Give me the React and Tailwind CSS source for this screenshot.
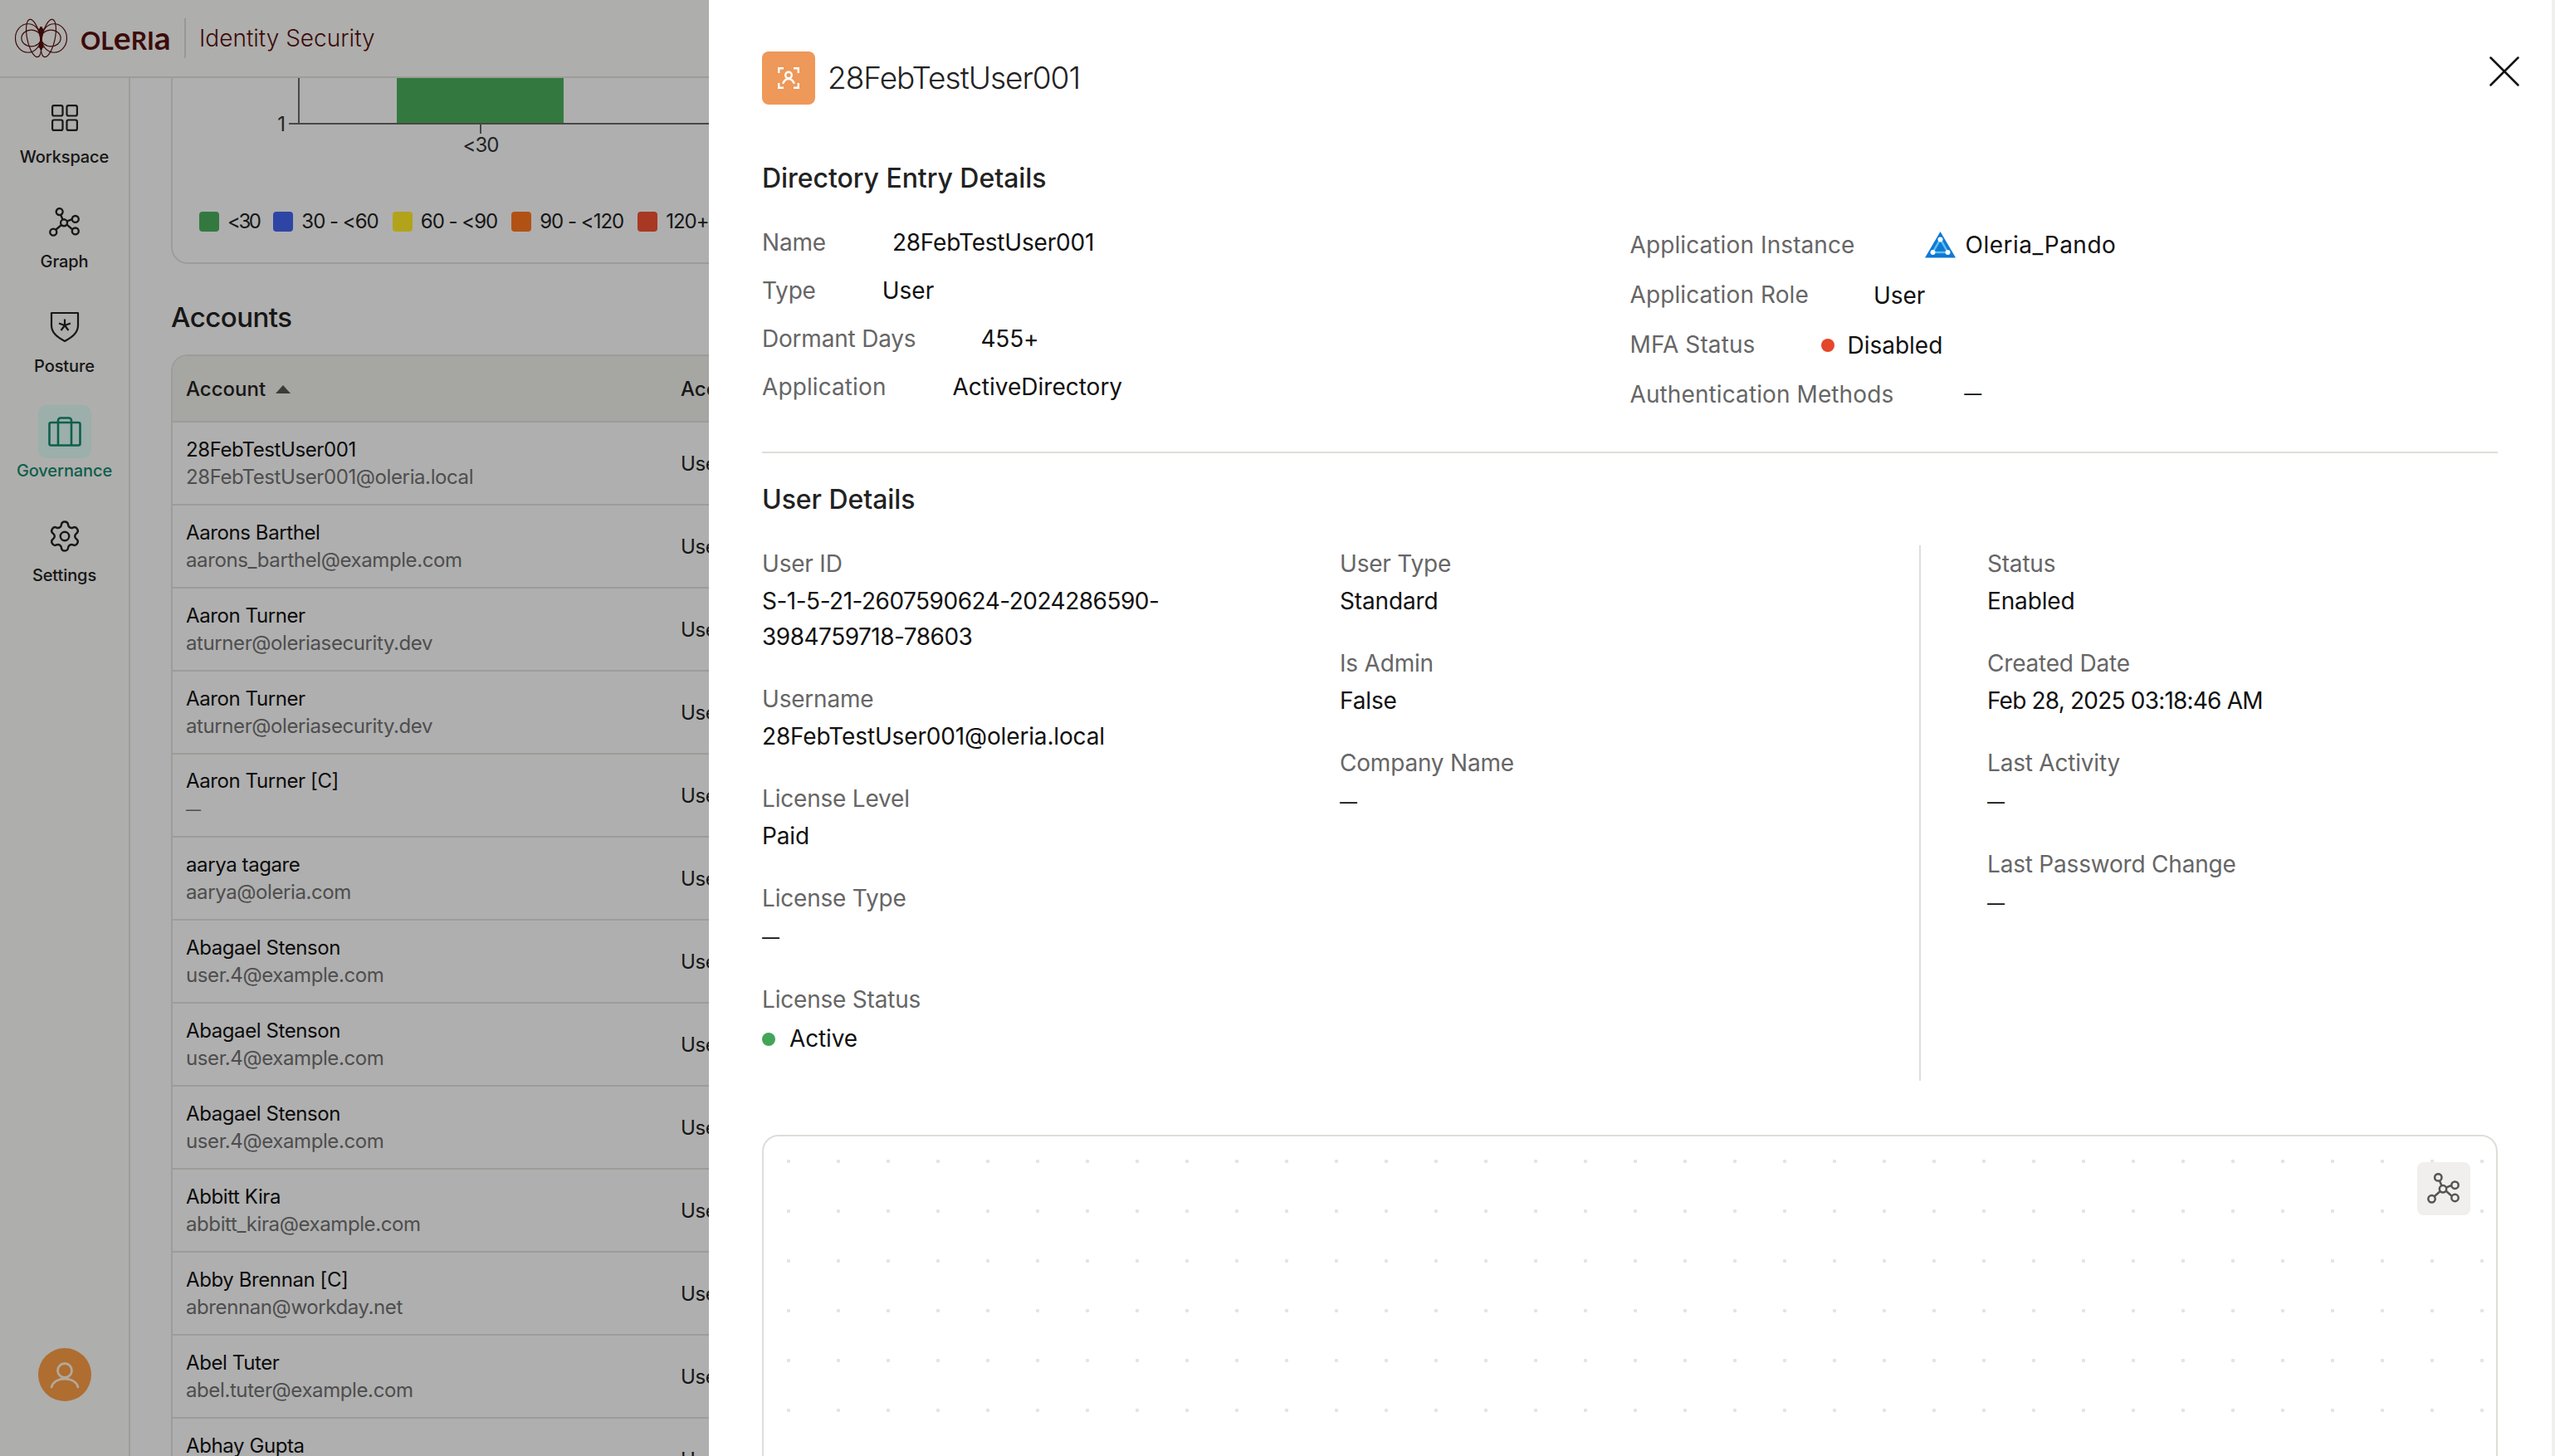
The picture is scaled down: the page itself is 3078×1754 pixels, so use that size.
import { Settings, X } from 'lucide-react'

const ACCOUNTS = [
  ['28FebTestUser001', '28FebTestUser001@oleria.local'],
  ['Aarons Barthel', 'aarons_barthel@example.com'],
  ['Aaron Turner', 'aturner@oleriasecurity.dev'],
  ['Aaron Turner', 'aturner@oleriasecurity.dev'],
  ['Aaron Turner [C]', null],
  ['aarya tagare', 'aarya@oleria.com'],
  ['Abagael Stenson', 'user.4@example.com'],
  ['Abagael Stenson', 'user.4@example.com'],
  ['Abagael Stenson', 'user.4@example.com'],
  ['Abbitt Kira', 'abbitt_kira@example.com'],
  ['Abby Brennan [C]', 'abrennan@workday.net'],
  ['Abel Tuter', 'abel.tuter@example.com'],
  ['Abhay Gupta', ''],
]

const LEGEND = [
  ['<30', 'bg-[#49ae5b]', 'tracking-[-2.5px]'],
  ['30 - <60', 'bg-[#4364ed]', 'tracking-[-1px]'],
  ['60 - <90', 'bg-[#ffea28]', 'tracking-[-1px]'],
  ['90 - <120', 'bg-[#ff751d]', 'tracking-[-1px]'],
  ['120+', 'bg-[#f14f33]', 'tracking-[-1px]'],
]

function NetworkIcon({ className }) {
  return (
    <svg viewBox="0 0 40 38" fill="none" stroke="currentColor" strokeWidth="2.5" className={className}>
      <path d="M15 9.5l2.5 6M22.7 17.6l6.6-2.6M22.5 21.500l6.800 6M15.800 22l-7.400 6.500" />
      <circle cx="13.3" cy="5.4" r="4.2" />
      <circle cx="33.500" cy="14.700" r="4.200" />
      <circle cx="33.500" cy="30" r="4.200" />
      <circle cx="5.500" cy="31.300" r="4.200" />
      <circle cx="19" cy="19.300" r="4.200" />
    </svg>
  )
}

function WorkspaceIcon({ className }) {
  return (
    <svg viewBox="0 0 32 32" fill="none" stroke="currentColor" strokeWidth="2.2" className={className}>
      <rect x="1.1" y="1.1" width="12.4" height="12.4" rx="2" />
      <rect x="18.5" y="1.1" width="12.4" height="12.4" rx="2" />
      <rect x="1.1" y="18.5" width="12.4" height="12.4" rx="2" />
      <rect x="18.5" y="18.5" width="12.4" height="12.4" rx="2" />
    </svg>
  )
}

function ShieldIcon({ className }) {
  return (
    <svg viewBox="0 0 36 38" fill="none" stroke="currentColor" strokeWidth="2.2" className={className}>
      <path d="M2 2h32v15c0 9-7 14-16 19C9 31 2 26 2 17V2z" strokeLinejoin="round" />
      <path d="M18 9.500v7.500M18 17l7-2.500M18 17l-7-2.500M18 17l-4.500 6M18 17l4.500 6" />
    </svg>
  )
}

function CaseIcon({ className }) {
  return (
    <svg viewBox="0 0 40 36" fill="none" stroke="currentColor" strokeWidth="2.6" className={className}>
      <rect x="1.500" y="7" width="37" height="27.500" rx="2" />
      <path d="M12 34.500V4.500a3 3 0 0 1 3-3h10a3 3 0 0 1 3 3v30" />
    </svg>
  )
}

function ScanUserIcon({ className }) {
  return (
    <svg viewBox="0 0 26 26" fill="none" stroke="currentColor" strokeWidth="2.4" className={className}>
      <path d="M1.200 7V1.200H7M19 1.200h5.800V7M1.200 19v5.800H7M19 24.800h5.800V19" />
      <circle cx="13" cy="9.500" r="3.800" />
      <path d="M6.500 19c1.500-3.500 3.800-5 6.500-5s5 1.500 6.500 5" strokeLinecap="round" />
    </svg>
  )
}

function AzureIcon({ className }) {
  return (
    <svg viewBox="0 0 37 32" className={className}>
      <path d="M18.500 0L37 31.500H0z" fill="#0f78d4" strokeLinejoin="round" />
      <path d="M18.500 9L9.500 25h18z" fill="none" stroke="#5cc1ee" strokeWidth="2.500" />
      <circle cx="18.500" cy="9.500" r="3" fill="#fff" />
      <circle cx="9.500" cy="25" r="3" fill="#fff" />
      <circle cx="27.500" cy="25" r="3" fill="#fff" />
    </svg>
  )
}

function OleriaMark({ className }) {
  return (
    <svg viewBox="0 0 64 48" fill="none" stroke="currentColor" strokeWidth="1.2" className={className}>
      <ellipse cx="16" cy="24" rx="15.500" ry="17.500" />
      <ellipse cx="48" cy="24" rx="15.500" ry="17.500" />
      <ellipse cx="20" cy="24" rx="12" ry="10" />
      <ellipse cx="44" cy="24" rx="12" ry="10" />
      <ellipse cx="23" cy="24" rx="8" ry="23.500" transform="rotate(-12 23 24)" />
      <ellipse cx="41" cy="24" rx="8" ry="23.500" transform="rotate(12 41 24)" />
      <path d="M32 10v28" strokeWidth="3" />
      <path d="M29.500 12l2.500 12 2.500-12M29.500 36l2.500-12 2.500 12" strokeWidth="1.400" />
    </svg>
  )
}

function NavItem({ icon, label, active }) {
  return (
    <div className={`flex h-[126px] flex-col items-center ${active ? 'text-[#13886e]' : 'text-[#222]'}`}>
      <div className={`flex h-[64px] w-[64px] items-center justify-center rounded-[10px] ${active ? 'bg-[#e0fbf4]' : ''}`}>
        {icon}
      </div>
      <div className="h-[32px] text-[20px] leading-[30px] font-medium tracking-[-0.1px]">{label}</div>
    </div>
  )
}

function Dash({ className = 'text-[21px]' }) {
  return <span className={className}>—</span>
}

function Pair({ label, children, tight, className = '' }) {
  return (
    <div className={`flex items-center ${className}`}>
      <span className={`text-[#666] ${tight ? 'tracking-[-0.2px]' : 'tracking-[0.1px]'}`}>{label}</span>
      {children}
    </div>
  )
}

function Field({ label, children }) {
  return (
    <div className="mb-[33px]">
      <div className="mb-[4px] h-[40px] leading-[40px] text-[#666] tracking-[-0.2px]">{label}</div>
      <div className="leading-[43px] tracking-[-0.15px] text-[#111]">{children}</div>
    </div>
  )
}

export default function App() {
  return (
    <div className="relative h-screen w-screen overflow-hidden bg-[#fbfbfb] font-['Inter',sans-serif] text-[#222]">
      <header className="flex h-[94px] items-center border-b-2 border-[#e0e0dc] bg-[#f9f9f6] pl-[18px] text-[#56100f]">
        <OleriaMark className="h-[48px] w-[63px]" />
        <div className="ml-[16px] flex w-[109px] items-baseline font-['Lato',sans-serif] font-bold leading-none">
          <span className="text-[30px]">OL</span>
          <span className="text-[39px] leading-[30px]">e</span>
          <span className="text-[30px]">RI</span>
          <span className="text-[39px] leading-[30px]">a</span>
        </div>
        <div className="ml-[16px] h-[48px] w-[2px] bg-[#d8d8d4]" />
        <div className="ml-[16px] text-[28px] font-light">Identity Security</div>
      </header>

      <div className="flex h-[1660px]">
        <aside className="flex w-[157px] shrink-0 flex-col border-r-2 border-[#e0e0dc] bg-[#f9f9f6] pt-[16px]">
          <NavItem icon={<WorkspaceIcon className="h-[32px] w-[32px]" />} label="Workspace" />
          <NavItem icon={<NetworkIcon className="h-[36px] w-[38px]" />} label="Graph" />
          <NavItem icon={<ShieldIcon className="h-[38px] w-[36px]" />} label="Posture" />
          <NavItem icon={<CaseIcon className="h-[36px] w-[40px]" />} label="Governance" active />
          <NavItem icon={<Settings className="h-[42px] w-[42px]" strokeWidth={1.4} />} label="Settings" />
          <div className="mt-auto mb-[66px] flex h-[64px] w-[64px] items-center justify-center self-center rounded-full bg-[#fb9d45] text-[#fff2e0]">
            <svg viewBox="0 0 36 36" fill="none" stroke="currentColor" strokeWidth="2.800" className="h-[36px] w-[36px]">
              <circle cx="18" cy="13" r="8.500" />
              <path d="M2 33c2-7 9-10 16-10s14 3 16 10" strokeLinecap="round" />
            </svg>
          </div>
        </aside>

        {/* the drawer hides everything past x=854 */}
        <main className="w-[697px] shrink-0 overflow-hidden pl-[49px]">
          <div className="h-[224px] w-[2800px] rounded-b-[20px] border-x-2 border-b-2 border-[#e0e0dc]">
            <svg width="1000" height="100" className="block">
              <rect x="270" y="0" width="201" height="55" fill="#49ae5b" />
              <path d="M152 0v55M140 55h860M371 55v12" stroke="#666" strokeWidth="2" fill="none" />
              <text x="136" y="64" textAnchor="end" fontSize="24" fill="#333">1</text>
              <text x="371" y="89" textAnchor="middle" fontSize="24" letterSpacing="-1" fill="#333">{'<30'}</text>
            </svg>
            <div className="mt-[61px] flex h-[24px] items-center pl-[32px] text-[24px]">
              {LEGEND.map(([label, color, spacing]) => (
                <div key={label} className="mr-[17px] flex items-center gap-[10px]">
                  <span className={`h-[24px] w-[24px] rounded-[4px] ${color}`} />
                  <span className={`whitespace-nowrap ${spacing}`}>{label}</span>
                </div>
              ))}
            </div>
          </div>

          <h2 className="mt-[42px] mb-[23px] h-[44px] text-[33px] leading-[44px] font-medium tracking-[-0.5px]">Accounts</h2>

          <div className="w-[2800px] rounded-t-[20px] border-x-2 border-t-2 border-[#e0e0dc] text-[24px]">
            <div className="grid h-[80px] grid-cols-[596px_1fr] items-center rounded-t-[18px] border-b-2 border-[#e0e0dc] bg-[#eeeee9] px-[16px] pt-[2px] font-medium">
              <div className="flex items-center gap-[12px]">
                Account
                <span className="h-0 w-0 border-x-[9px] border-b-[10px] border-x-transparent border-b-[#555]" />
              </div>
              <div>Account Type</div>
            </div>
            {ACCOUNTS.map(([name, email], i) => (
              <div key={i} className="grid h-[100px] grid-cols-[596px_1fr] items-center border-b-2 border-[#e0e0dc] px-[16px] tracking-[-0.4px]">
                <div className="leading-[33px]">
                  <div className="text-[#111]">{name}</div>
                  <div className="min-h-[33px] text-[#707070]">{email === null ? <Dash className="text-[18px]" /> : email}</div>
                </div>
                <div className="pt-[2px]">User</div>
              </div>
            ))}
          </div>
        </main>
      </div>

      {/* overlay + drawer */}
      <div className="absolute inset-0 bg-black/30" />
      <div className="absolute inset-y-0 right-0 left-[854px] overflow-hidden border-r-4 border-[#f0f0ee] bg-white pt-[62px] pr-[65px] pl-[64px] text-[28px] text-[#111]">
        <X className="absolute top-[53px] right-[24px] h-[66px] w-[66px] text-[#111]" strokeWidth={0.9} />

        <div className="flex h-[64px] items-center gap-[15px]">
          <div className="flex h-[64px] w-[64px] items-center justify-center rounded-[8px] bg-[#ee9859] text-white">
            <ScanUserIcon className="h-[26px] w-[26px]" />
          </div>
          <div className="text-[37px] font-light tracking-[-1px] text-[#222]">28FebTestUser001</div>
        </div>

        <h2 className="mt-[67px] h-[44px] text-[32px] leading-[44px] font-medium tracking-[-0.05px] text-[#222]">Directory Entry Details</h2>

        <div className="mt-[26px] grid h-[242px] grid-cols-2">
          <div className="flex flex-col">
            <Pair label="Name" tight className="h-[58px] gap-[80px]"><span className="tracking-[-0.2px]">28FebTestUser001</span></Pair>
            <Pair label="Type" tight className="h-[58px] gap-[80px]"><span>User</span></Pair>
            <Pair label="Dormant Days" tight className="h-[58px] gap-[78px]"><span className="tracking-[-0.2px]">455+</span></Pair>
            <Pair label="Application" className="h-[58px] gap-[80px]"><span>ActiveDirectory</span></Pair>
          </div>
          <div className="flex flex-col pt-[2px]">
            <Pair label="Application Instance" className="h-[60px] gap-[80px]">
              <span className="flex items-center gap-[12px] pl-[4px] tracking-[0.5px]">
                <AzureIcon className="h-[32px] w-[37px]" />
                Oleria_Pando
              </span>
            </Pair>
            <Pair label="Application Role" className="h-[60px] gap-[78px]"><span className="pt-[2px]">User</span></Pair>
            <Pair label="MFA Status" className="h-[60px] gap-[80px]">
              <span className="flex items-center gap-[15px] pt-[2px]">
                <span className="h-[16px] w-[16px] rounded-full bg-[#e4472a]" />
                Disabled
              </span>
            </Pair>
            <Pair label="Authentication Methods" className="h-[60px] gap-[85px]"><Dash /></Pair>
          </div>
        </div>

        <div className="mt-[39px] h-[2px] bg-[#deded9]" />

        <h2 className="mt-[34px] h-[44px] text-[32px] leading-[44px] font-medium tracking-[-0.05px] text-[#222]">User Details</h2>

        <div className="mt-[33px] grid h-[645px] grid-cols-[696px_698px_1fr] pt-[2px]">
          <div>
            <Field label="User ID"><span className="block w-[540px] tracking-[-0.5px] break-words">S-1-5-21-2607590624-2024286590-3984759718-78603</span></Field>
            <Field label="Username">28FebTestUser001@oleria.local</Field>
            <Field label="License Level">Paid</Field>
            <Field label="License Type"><Dash /></Field>
            <Field label="License Status">
              <span className="flex items-center gap-[17px] pt-[2px]">
                <span className="h-[16px] w-[16px] rounded-full bg-[#43a558]" />
                Active
              </span>
            </Field>
          </div>
          <div>
            <Field label="User Type">Standard</Field>
            <Field label="Is Admin">False</Field>
            <Field label="Company Name"><Dash /></Field>
          </div>
          <div className="-mt-[2px] h-[645px] border-l-2 border-[#deded9] pt-[2px] pl-[80px]">
            <Field label="Status">Enabled</Field>
            <Field label="Created Date"><span className="tracking-[-0.8px]">Feb 28, 2025 03:18:46 AM</span></Field>
            <Field label="Last Activity"><Dash /></Field>
            <Field label="Last Password Change"><Dash /></Field>
          </div>
        </div>

        <div className="relative mt-[65px] h-[600px] rounded-[20px] border-2 border-[#deded9] bg-[radial-gradient(circle,#e4e4e2_2px,transparent_2.5px)] bg-[size:60px_60px]">
          <div className="absolute top-[31px] right-[31px] flex h-[64px] w-[64px] items-center justify-center rounded-[8px] bg-[#f0efee] text-[#555]">
            <NetworkIcon className="h-[38px] w-[40px]" />
          </div>
        </div>
      </div>
    </div>
  )
}
